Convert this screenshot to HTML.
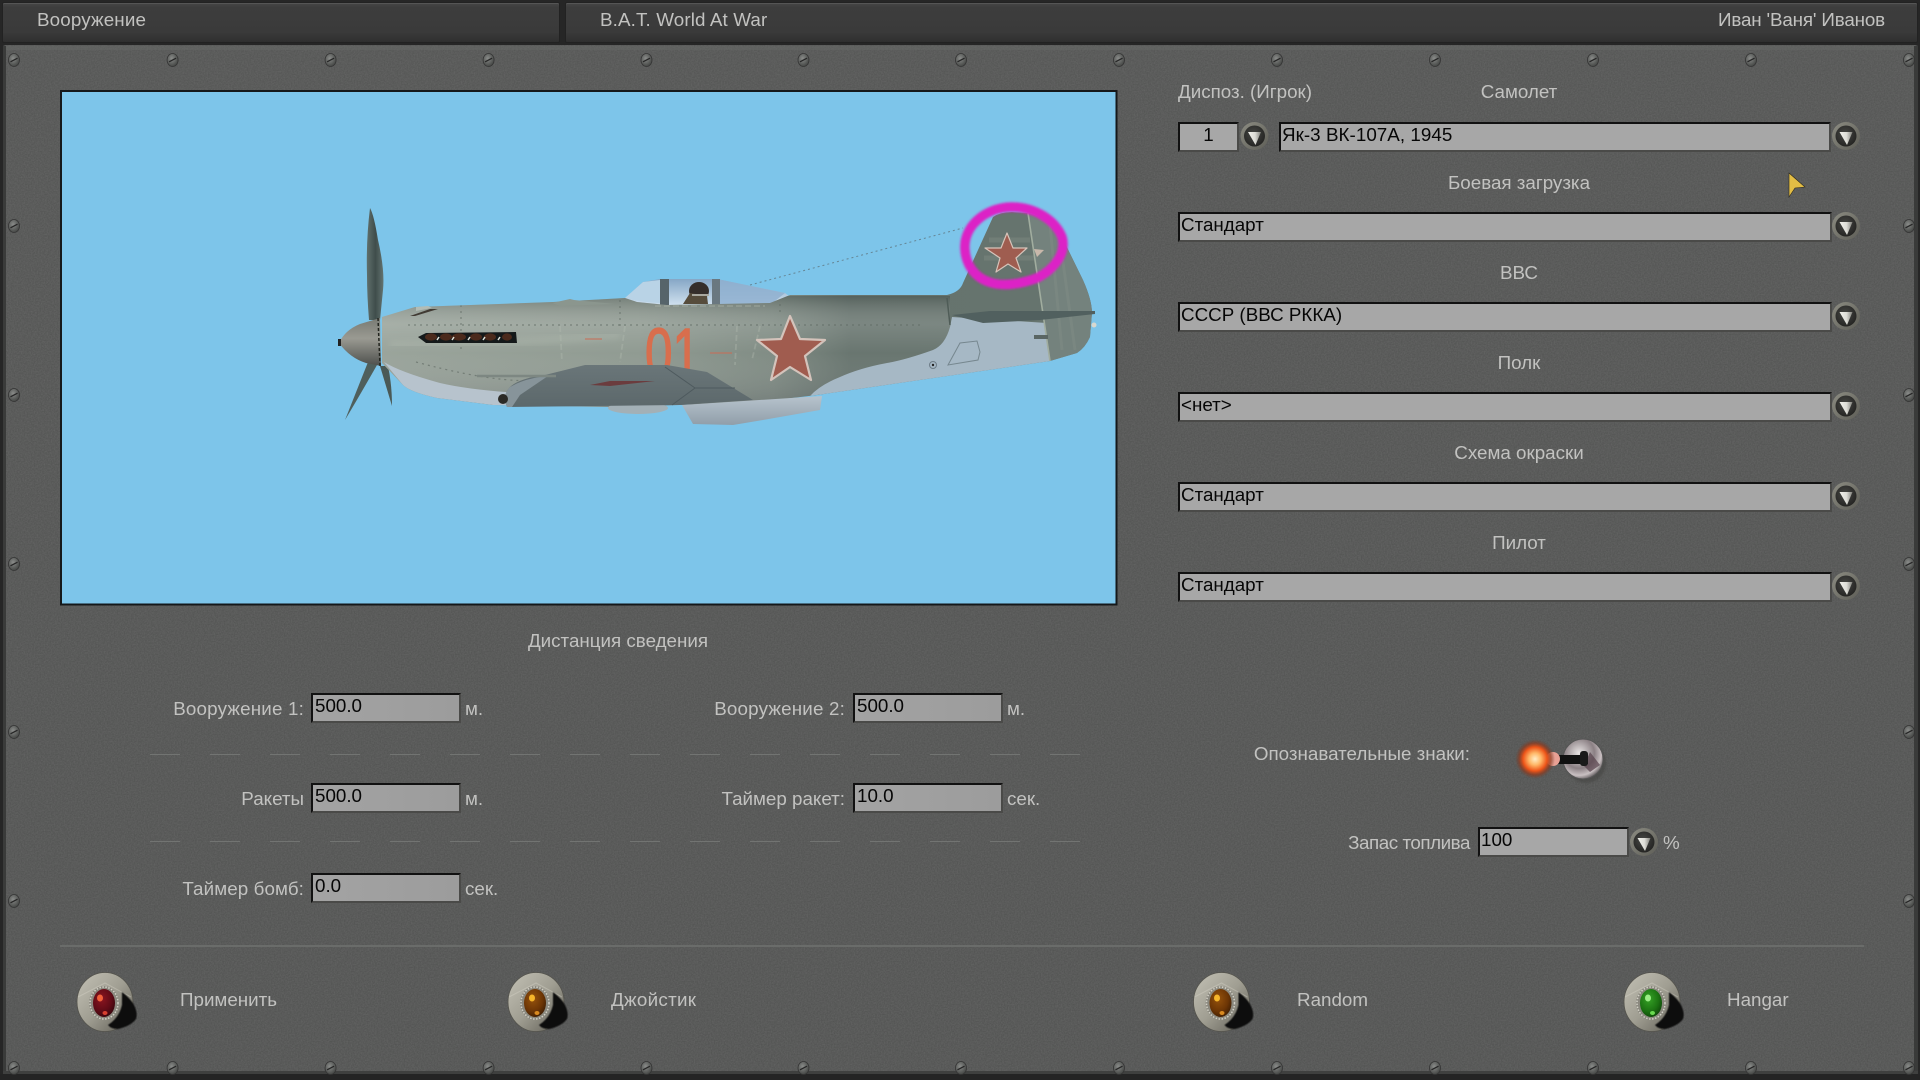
<!DOCTYPE html>
<html lang="ru"><head><meta charset="utf-8"><title>Вооружение</title>
<style>
html,body{margin:0;padding:0;background:#262626}
body{width:1920px;height:1080px;position:relative;overflow:hidden;font-family:"Liberation Sans","Noto Sans CJK SC",sans-serif;font-size:18.8px;color:#c2c2c0}
.a{position:absolute;white-space:nowrap;line-height:22px;height:22px}
.c{transform:translateX(-50%)}
.r{text-align:right}
.f{position:absolute;box-sizing:border-box;height:30px;background:#a7a7a7;border:2px solid;border-color:#111 #4a4a48 #4a4a48 #111;color:#060606;line-height:22px;padding-left:1px;white-space:nowrap}
.f.s{background:linear-gradient(90deg,#a3a3a3,#9c9c9c);padding-left:2px}
.tab{position:absolute;top:2px;height:41px;background:linear-gradient(180deg,#464646 0,#3d3d3d 12%,#3a3a3a 75%,#2f2f2f 100%);border:1px solid #222;box-sizing:border-box;border-radius:2px;box-shadow:inset 0 1px 0 #555}
svg.o{position:absolute;left:0;top:0}
</style></head><body>
<svg class="o" width="1920" height="1080" viewBox="0 0 1920 1080">
<defs>
<clipPath id="fc"><path d="M382,317 L415,307 L553,302 L625,298 L637,302 L667,305 L770,303 L790,295 L947,295 Q960,292 963,283 L993,217 Q1000,212 1012,212 L1028,213 Q1048,218 1060,233 L1083,280 Q1092,300 1092,313 L1090,337 Q1085,348 1077,353 L1050,361 L817,395 L750,403 L610,407 L493,405 L437,398 Q410,392 403,385 L382,363Z"/></clipPath>
<filter id="n" x="0" y="0" width="100%" height="100%"><feTurbulence type="fractalNoise" baseFrequency=".7" numOctaves="3" seed="4"/><feColorMatrix values="0 0 0 0 .4 0 0 0 0 .4 0 0 0 0 .4 .9 0 0 0 -.25"/></filter>
<filter id="n2" x="0" y="0" width="100%" height="100%"><feTurbulence type="fractalNoise" baseFrequency=".9" numOctaves="2" seed="9"/><feColorMatrix values="0 0 0 0 .15 0 0 0 0 .15 0 0 0 0 .15 1.1 0 0 0 -.42"/></filter>
<filter id="b1"><feGaussianBlur stdDeviation="1"/></filter>
<filter id="b5"><feGaussianBlur stdDeviation=".6"/></filter>
<filter id="b4"><feGaussianBlur stdDeviation="3"/></filter>
<linearGradient id="pn" x1="0" y1="0" x2="0" y2="1"><stop offset="0" stop-color="#565756"/><stop offset="1" stop-color="#545554"/></linearGradient>
<linearGradient id="fx" gradientUnits="userSpaceOnUse" x1="382" y1="0" x2="1092" y2="0"><stop offset="0" stop-color="#98a299"/><stop offset=".36" stop-color="#8e9990"/><stop offset=".55" stop-color="#7e8a82"/><stop offset=".66" stop-color="#66736d"/><stop offset="1" stop-color="#66746e"/></linearGradient>
<linearGradient id="fy" gradientUnits="userSpaceOnUse" x1="0" y1="296" x2="0" y2="410"><stop offset="0" stop-color="#2e3836" stop-opacity=".3"/><stop offset=".25" stop-color="#fff" stop-opacity=".14"/><stop offset=".5" stop-color="#fff" stop-opacity=".02"/><stop offset="1" stop-color="#334" stop-opacity=".2"/></linearGradient>
<linearGradient id="can" gradientUnits="userSpaceOnUse" x1="0" y1="279" x2="0" y2="305"><stop offset="0" stop-color="#86a7c6"/><stop offset="1" stop-color="#cfe0ee"/></linearGradient>
<linearGradient id="sp" gradientUnits="userSpaceOnUse" x1="0" y1="320" x2="0" y2="366"><stop offset="0" stop-color="#7b7d76"/><stop offset=".4" stop-color="#9a9a92"/><stop offset="1" stop-color="#4d4f4c"/></linearGradient>
<linearGradient id="bl" gradientUnits="userSpaceOnUse" x1="367" y1="0" x2="384" y2="0"><stop offset="0" stop-color="#5f6f6c"/><stop offset=".5" stop-color="#3f4d4b"/><stop offset="1" stop-color="#667673"/></linearGradient>
<linearGradient id="wg" gradientUnits="userSpaceOnUse" x1="0" y1="365" x2="0" y2="407"><stop offset="0" stop-color="#6a7679"/><stop offset="1" stop-color="#5c686b"/></linearGradient>
<linearGradient id="sc" gradientUnits="userSpaceOnUse" x1="0" y1="397" x2="0" y2="426"><stop offset="0" stop-color="#b6c2cc"/><stop offset="1" stop-color="#8f9da8"/></linearGradient>
<radialGradient id="scr" cx=".42" cy=".38" r=".7"><stop offset="0" stop-color="#8a8c8a"/><stop offset="1" stop-color="#3c3e3c"/></radialGradient>
<radialGradient id="btn" cx=".45" cy=".4" r=".6"><stop offset="0" stop-color="#474845"/><stop offset="1" stop-color="#252523"/></radialGradient>
<linearGradient id="ring" x1="0" y1="0" x2="1" y2="1"><stop offset="0" stop-color="#8c8c82"/><stop offset="1" stop-color="#5e5e57"/></linearGradient>
<linearGradient id="tri" x1="0" y1="0" x2="1" y2="0"><stop offset="0" stop-color="#f2f2ec"/><stop offset=".55" stop-color="#dcdcd6"/><stop offset="1" stop-color="#7f7f79"/></linearGradient>
<linearGradient id="plate" x1="0" y1="0" x2="1" y2="1"><stop offset="0" stop-color="#c4c2b6"/><stop offset=".5" stop-color="#a09e92"/><stop offset="1" stop-color="#5c5a52"/></linearGradient>
<radialGradient id="gr" cx=".4" cy=".35" r=".75"><stop offset="0" stop-color="#8a1520"/><stop offset=".6" stop-color="#5f0b16"/><stop offset="1" stop-color="#2f060c"/></radialGradient>
<radialGradient id="ga" cx=".4" cy=".35" r=".75"><stop offset="0" stop-color="#95520c"/><stop offset=".6" stop-color="#6c3505"/><stop offset="1" stop-color="#361a03"/></radialGradient>
<radialGradient id="gg" cx=".4" cy=".35" r=".75"><stop offset="0" stop-color="#36a226"/><stop offset=".6" stop-color="#1c7212"/><stop offset="1" stop-color="#0c3d08"/></radialGradient>
<radialGradient id="glow"><stop offset="0" stop-color="#ffeec8"/><stop offset=".3" stop-color="#ffb868"/><stop offset=".6" stop-color="#ee5418"/><stop offset=".8" stop-color="#8f3a1e" stop-opacity=".7"/><stop offset="1" stop-color="#6a4030" stop-opacity="0"/></radialGradient>
<radialGradient id="chr" cx=".4" cy=".35" r=".7"><stop offset="0" stop-color="#e8e4e4"/><stop offset=".55" stop-color="#8b8084"/><stop offset=".8" stop-color="#c9c0c2"/><stop offset="1" stop-color="#4f4a4c"/></radialGradient>
<g id="s"><ellipse cx="0" cy="0" rx="5.5" ry="6.5" fill="url(#scr)" stroke="#343434" stroke-width=".8"/><path d="M-3.5,1.8 L3.5,-1.8" stroke="#262626" stroke-width="1.2"/></g>
<g id="d"><circle r="14" fill="url(#ring)"/><circle r="10.5" fill="url(#btn)"/><path d="M-6.5,-4 L6.5,-4 L1,9 Z" fill="url(#tri)"/></g>
<g id="l"><ellipse rx="28" ry="29.5" cy="1" fill="url(#plate)" stroke="#55544d" stroke-width=".8"/><path d="M-27,-4 L0,-18 L26,-4" fill="none" stroke="#dcdacf" stroke-width="1" opacity=".35"/><path d="M17,-9 Q26,-2 29,4 Q33,12 31,18 Q26,25 13,28 Q6,28 3,24 Q14,17 17,4Z" fill="#0e0e0e" filter="url(#b5)"/><ellipse cx="-1" cy="2" rx="15" ry="17" fill="#8a887e"/><ellipse cx="-1" cy="2" rx="14" ry="16" fill="none" stroke="#d2d0c6" stroke-width="1.5" stroke-dasharray="1.5 1.5"/></g>
</defs>

<!-- panel -->
<rect x="3" y="45" width="1915" height="1029" rx="3" fill="url(#pn)"/>
<rect x="3" y="45" width="1915" height="1029" rx="3" filter="url(#n)" opacity=".3"/>
<rect x="3" y="45" width="1915" height="1029" rx="3" filter="url(#n2)" opacity=".4"/>
<rect x="4" y="46" width="1913" height="4" fill="#6a6c6a" opacity=".4"/>
<rect x="3" y="46" width="3" height="1028" fill="#3a3b3a"/>
<rect x="1914" y="46" width="4" height="1028" fill="#3a3b3a"/>
<rect x="3" y="1071" width="1915" height="3" fill="#3f403f"/>
<rect x="0" y="1074" width="1920" height="6" fill="#242424"/>

<!-- sky -->
<rect x="61" y="91" width="1055.5" height="513.5" fill="#7dc5ea" stroke="#15181a" stroke-width="2"/>

<!-- screws -->
<use href="#s" x="14" y="60"/><use href="#s" x="172.6" y="60"/><use href="#s" x="330.6" y="60"/><use href="#s" x="488.6" y="60"/><use href="#s" x="646.5" y="60"/><use href="#s" x="803.5" y="60"/><use href="#s" x="961" y="60"/><use href="#s" x="1119" y="60"/><use href="#s" x="1277" y="60"/><use href="#s" x="1435" y="60"/><use href="#s" x="1593" y="60"/><use href="#s" x="1751" y="60"/><use href="#s" x="1909" y="60"/>
<use href="#s" x="14" y="1068"/><use href="#s" x="172.6" y="1068"/><use href="#s" x="330.6" y="1068"/><use href="#s" x="488.6" y="1068"/><use href="#s" x="646.5" y="1068"/><use href="#s" x="803.5" y="1068"/><use href="#s" x="961" y="1068"/><use href="#s" x="1119" y="1068"/><use href="#s" x="1277" y="1068"/><use href="#s" x="1435" y="1068"/><use href="#s" x="1593" y="1068"/><use href="#s" x="1751" y="1068"/><use href="#s" x="1909" y="1068"/>
<use href="#s" x="14" y="226"/><use href="#s" x="14" y="395"/><use href="#s" x="14" y="564"/><use href="#s" x="14" y="732"/><use href="#s" x="14" y="901"/>
<use href="#s" x="1909" y="226"/><use href="#s" x="1909" y="395"/><use href="#s" x="1909" y="564"/><use href="#s" x="1909" y="732"/><use href="#s" x="1909" y="901"/>

<!-- antenna -->
<path d="M750,285 L963,228" stroke="#5f7680" stroke-width="1" stroke-dasharray="2 3" fill="none" opacity=".8"/>
<!-- prop -->
<path d="M370,208 Q374,215 378,240 Q385,270 383,290 L380,320 L369,320 Q367,295 367,275 Q366,240 370,208Z" fill="url(#bl)"/>
<path d="M372,352 L345,420 Q360,395 381,358Z" fill="#4f5f5c"/>
<path d="M380,366 L392,406 Q392,385 388,366Z" fill="#4a5956"/>
<!-- canopy -->
<path d="M625,298 L643,282 L660,279 L717,279 L785,293 L790,297 L770,306 L640,306Z" fill="url(#can)"/>
<path d="M717,279 L785,293 L770,305 L717,305Z" fill="#8fb0d0" opacity=".85"/>
<path d="M625,298 L643,282 L660,280 L660,303 Q640,302 625,298Z" fill="#b9d3e6"/>
<rect x="660" y="279" width="9" height="27" fill="#56646a"/>
<rect x="712" y="279" width="8" height="27" fill="#6a7880"/>
<ellipse cx="699" cy="291" rx="10" ry="9" fill="#352e2b"/><path d="M683,304 L690,293 L707,296 L708,304Z" fill="#564c3c"/><rect x="692" y="294" width="17" height="2" fill="#a8a79f"/>
<!-- fuselage -->
<path d="M382,317 L415,307 L553,302 L625,298 L637,302 L667,305 L770,303 L790,295 L947,295 Q960,292 963,283 L993,217 Q1000,212 1012,212 L1028,213 Q1048,218 1060,233 L1083,280 Q1092,300 1092,313 L1090,337 Q1085,348 1077,353 L1050,361 L817,395 L750,403 L610,407 L493,405 L437,398 Q410,392 403,385 L382,363Z" fill="url(#fx)"/>
<g clip-path="url(#fc)">
<rect x="380" y="296" width="570" height="115" fill="url(#fy)"/>
<path d="M390,345 Q500,345 620,335" stroke="#c8d0c2" stroke-width="8" fill="none" opacity=".18" filter="url(#b4)"/>
<!-- belly nose -->
<path d="M384,362 Q400,372 440,383 Q470,390 520,393 L520,406 L493,405 L437,398 Q410,392 403,385Z" fill="#b7c3cd"/>
<!-- rear light blue -->
<path d="M952,317 L950,327 Q945,345 933,350 Q905,360 887,363 Q860,368 840,377 Q820,385 810,396 L1050,365 L1047,323Z" fill="#a6b8c5"/>
<!-- rudder -->
<path d="M1028,213 Q1048,218 1060,233 L1083,280 Q1092,300 1092,313 L1090,337 Q1085,348 1077,353 L1050,361Z" fill="#74827d"/>
<path d="M989,240 L1030,240 M984,258 L1034,258" stroke="#8a968e" stroke-width="5" opacity=".3"/>
<path d="M1060,240 L1075,350 M1050,225 L1062,350" stroke="#8a968e" stroke-width="3" opacity=".25"/>
<!-- rivets / panels -->
<path d="M408,325 H920 M416,362 Q520,390 560,376 M461,305 L461,350 M620,300 L620,326 M780,304 L780,314" stroke="#5c665f" stroke-width="1.2" stroke-dasharray="2 4" fill="none" opacity=".6"/>
<path d="M655,306 L765,306 M560,326 L562,362 M625,326 L620,362 M737,326 L735,365 M760,326 L752,360" stroke="#b5beb1" stroke-width="1.8" fill="none" opacity=".35" stroke-dasharray="6 3"/>
</g>
<path d="M1028,213 L1050,361" stroke="#a1ad9f" stroke-width="1.6"/>
<path d="M947,298 L950,325" stroke="#4f5c57" stroke-width="1.5"/>
<!-- stabilizer -->
<path d="M952,315 L990,311 L1095,311 L1095,314 L1040,320 L983,323Z" fill="#51605f"/>
<rect x="1034" y="335" width="14" height="4" fill="#5a6664"/>
<circle cx="1094" cy="325" r="2.5" fill="#d8d8d0"/>
<path d="M948,365 L960,343 L977,341 L980,352 L978,360Z" fill="none" stroke="#76878f" stroke-width="1"/>
<circle cx="933" cy="365" r="3.5" fill="none" stroke="#6e7d88"/><circle cx="933" cy="365" r="1.2" fill="#222"/>
<path d="M410,316 L430,309 L438,309 L415,316Z" fill="#403a33"/>
<path d="M416,307 L428,306 L432,308 L416,311Z" fill="#b3bcb5"/>
<path d="M552,303 L570,299 L574,300 L615,304 L560,306Z" fill="#8b968e"/>
<!-- 01 -->
<text x="645" y="377" font-family="Liberation Sans" font-size="70" textLength="55" lengthAdjust="spacingAndGlyphs" fill="#d86e4d" stroke="#d86e4d" stroke-width="1.4">01</text>
<path d="M710,353 L732,353 M585,339 L602,339" stroke="#c86f58" stroke-width="1.5" opacity=".7"/>
<!-- star -->
<polygon points="790,316 800,339 825,340 805,356 811,380 790,367 771,380 777,356 757,340 781,339" fill="#a05c4f" stroke="#d4c3bb" stroke-width="2.2" stroke-linejoin="round"/>
<!-- exhaust -->
<path d="M418,337 L426,333 L516,332 L517,343 L426,343Z" fill="#15191a"/>
<ellipse cx="431" cy="337" rx="6" ry="3.6" fill="#4b2a1c"/><ellipse cx="446" cy="337" rx="6" ry="3.6" fill="#4b2a1c"/><ellipse cx="459" cy="337" rx="7" ry="3.6" fill="#4b2a1c"/><ellipse cx="476" cy="337" rx="6" ry="3.6" fill="#4b2a1c"/><ellipse cx="490" cy="337" rx="6" ry="3.6" fill="#4b2a1c"/><ellipse cx="507" cy="337" rx="5" ry="3.6" fill="#4b2a1c"/>
<path d="M437,340 l2,-3 M452,340 l2,-3 M468,340 l2,-3 M483,340 l2,-3 M498,340 l2,-3" stroke="#dfe4dd" stroke-width="1.5" fill="none"/>
<!-- spinner -->
<path d="M339,343 Q345,330 360,324 L380,318 L381,366 L366,363 Q350,358 339,343Z" fill="url(#sp)"/>
<rect x="338" y="339" width="3" height="7" fill="#222"/>
<path d="M378,318 L380,366" stroke="#23251f" stroke-width="1.5" stroke-dasharray="3 2" fill="none"/>
<!-- scoop -->
<path d="M682,405 L822,396 L820,410 L763,420 L733,425 L693,424Z" fill="url(#sc)"/>
<ellipse cx="638" cy="408" rx="30" ry="6" fill="#a3b0b6"/>
<!-- wing -->
<path d="M510,387 Q520,378 545,375 L585,365 L667,365 L707,372 L753,400 L680,405 L507,407 Q502,395 510,387Z" fill="url(#wg)"/>
<path d="M510,387 Q525,378 548,376 L520,395 L512,407 L507,407 Q502,395 510,387Z" fill="#87949a"/>
<path d="M477,376 L556,376" stroke="#7d8782" stroke-width="2.5" fill="none"/>
<path d="M590,385 L610,381 L655,381 L610,386Z" fill="#6b3c3e"/>
<path d="M665,367 L695,388 L672,405 M695,388 L735,388" stroke="#4e5a5e" stroke-width="1" fill="none"/>
<circle cx="503" cy="399" r="5" fill="#2b2a26"/>
<!-- tail star -->
<polygon points="1007,233 1013,248 1027,248 1016,258 1021,272 1008,264 996,272 1000,258 985,248 1001,248" fill="#9f5d50" stroke="#d7c4ba" stroke-width="1.2" stroke-linejoin="round"/>
<polygon points="1034,249 1044,250 1037,257" fill="#c9b8ab"/>
<!-- magenta -->
<path d="M965,250 C963,227 984,208 1011,207 C1035,207 1055,220 1062,237 C1067,254 1053,270 1037,278 C1021,284 1002,287 989,282 C974,277 966,264 965,250Z" fill="none" stroke="#dc22c6" stroke-width="9.5" filter="url(#b1)"/>
<!-- dividers -->
<path d="M150,754.5 H1080 M150,841.5 H1080" stroke="#727472" stroke-width="1" stroke-dasharray="30 30" fill="none"/>
<rect x="60" y="945" width="1804" height="2" fill="#6a6c6a"/>
<!-- dropdown buttons -->
<use href="#d" x="1254.5" y="136"/><use href="#d" x="1846" y="136"/><use href="#d" x="1846" y="226"/><use href="#d" x="1846" y="316"/><use href="#d" x="1846" y="406"/><use href="#d" x="1846" y="496"/><use href="#d" x="1846" y="586"/><use href="#d" x="1644" y="842"/>
<!-- toggle -->
<circle cx="1586" cy="763" r="20" fill="#3f3f3d" opacity=".5" filter="url(#b1)"/>
<circle cx="1583" cy="759" r="20" fill="url(#chr)" stroke="#555" stroke-width="1"/>
<path d="M1590,752 L1600,765 L1590,772 L1584,766Z" fill="#55404a" opacity=".7"/>
<rect x="1558" y="755" width="30" height="9" fill="#111"/>
<rect x="1580" y="751" width="8" height="15" rx="3" fill="#1a1a1a"/>
<circle cx="1553" cy="759" r="7" fill="#e8a094"/>
<circle cx="1535" cy="759" r="20" fill="url(#glow)"/>
<!-- LEDs -->
<use href="#l" x="105" y="1001"/><ellipse cx="104" cy="1003" rx="11" ry="14" fill="url(#gr)"/><ellipse cx="100" cy="998" rx="3" ry="3.5" fill="#f0603a"/><ellipse cx="105" cy="1013" rx="2.5" ry="2" fill="#d84030"/>
<use href="#l" x="536" y="1001"/><ellipse cx="535" cy="1003" rx="11" ry="14" fill="url(#ga)"/><ellipse cx="532" cy="998" rx="3" ry="3.5" fill="#f5b52a"/><ellipse cx="537" cy="1013" rx="2.5" ry="2" fill="#d98a20"/>
<use href="#l" x="1221.5" y="1001"/><ellipse cx="1220.5" cy="1003" rx="11" ry="14" fill="url(#ga)"/><ellipse cx="1217" cy="998" rx="3" ry="3.5" fill="#f5b52a"/><ellipse cx="1222" cy="1013" rx="2.5" ry="2" fill="#d98a20"/>
<use href="#l" x="1652" y="1001"/><ellipse cx="1651" cy="1003" rx="11" ry="14" fill="url(#gg)"/><ellipse cx="1648" cy="998" rx="3" ry="3.5" fill="#9cee86"/><ellipse cx="1652.5" cy="1013" rx="2.5" ry="2" fill="#6ada50"/>
<!-- cursor -->
<polygon points="1789,173 1805,187 1795,188 1789,197" fill="#e3bd45" stroke="#2d2a1c" stroke-width=".6"/>
</svg>

<div class="tab" style="left:2px;width:558px"></div>
<div class="tab" style="left:565px;width:1353px"></div>
<div class="a" style="left:37px;top:9px;letter-spacing:.15px">Вооружение</div>
<div class="a" style="left:600px;top:9px;letter-spacing:.13px">B.A.T. World At War</div>
<div class="a r" style="right:35px;top:9px;letter-spacing:-.15px">Иван 'Ваня' Иванов</div>

<div class="a" style="left:1178px;top:81px">Диспоз. (Игрок)</div>
<div class="a c" style="left:1519px;top:81px">Самолет</div>
<div class="f" style="left:1178px;top:122px;width:61px;text-align:center;padding:0">1</div>
<div class="f" style="left:1279px;top:122px;width:552px;letter-spacing:.05px">Як-3 ВК-107А, 1945</div>
<div class="a c" style="left:1519px;top:172px">Боевая загрузка</div>
<div class="f" style="left:1178px;top:212px;width:654px">Стандарт</div>
<div class="a c" style="left:1519px;top:262px">ВВС</div>
<div class="f" style="left:1178px;top:302px;width:654px">СССР (ВВС РККА)</div>
<div class="a c" style="left:1519px;top:352px">Полк</div>
<div class="f" style="left:1178px;top:392px;width:654px">&lt;нет&gt;</div>
<div class="a c" style="left:1519px;top:442px">Схема окраски</div>
<div class="f" style="left:1178px;top:482px;width:654px">Стандарт</div>
<div class="a c" style="left:1519px;top:532px">Пилот</div>
<div class="f" style="left:1178px;top:572px;width:654px">Стандарт</div>

<div class="a c" style="left:618px;top:630px">Дистанция сведения</div>

<div class="a r" style="right:1616px;top:698px;letter-spacing:.18px">Вооружение 1:</div>
<div class="f s" style="left:311px;top:693px;width:150px">500.0</div>
<div class="a" style="left:465px;top:698px">м.</div>
<div class="a r" style="right:1075px;top:698px;letter-spacing:.18px">Вооружение 2:</div>
<div class="f s" style="left:853px;top:693px;width:150px">500.0</div>
<div class="a" style="left:1007px;top:698px">м.</div>

<div class="a r" style="right:1616px;top:788px">Ракеты</div>
<div class="f s" style="left:311px;top:783px;width:150px">500.0</div>
<div class="a" style="left:465px;top:788px">м.</div>
<div class="a r" style="right:1075px;top:788px">Таймер ракет:</div>
<div class="f s" style="left:853px;top:783px;width:150px">10.0</div>
<div class="a" style="left:1007px;top:788px">сек.</div>

<div class="a r" style="right:1616px;top:878px;letter-spacing:.1px">Таймер бомб:</div>
<div class="f s" style="left:311px;top:873px;width:150px">0.0</div>
<div class="a" style="left:465px;top:878px">сек.</div>

<div class="a r" style="right:450px;top:743px">Опознавательные знаки:</div>
<div class="a r" style="right:450px;top:832px;letter-spacing:-.45px">Запас топлива</div>
<div class="f" style="left:1478px;top:827px;width:151px">100</div>
<div class="a" style="left:1663px;top:832px">%</div>

<div class="a" style="left:180px;top:989px">Применить</div>
<div class="a" style="left:611px;top:989px;letter-spacing:.3px">Джойстик</div>
<div class="a" style="left:1297px;top:989px">Random</div>
<div class="a" style="left:1727px;top:989px">Hangar</div>
</body></html>
